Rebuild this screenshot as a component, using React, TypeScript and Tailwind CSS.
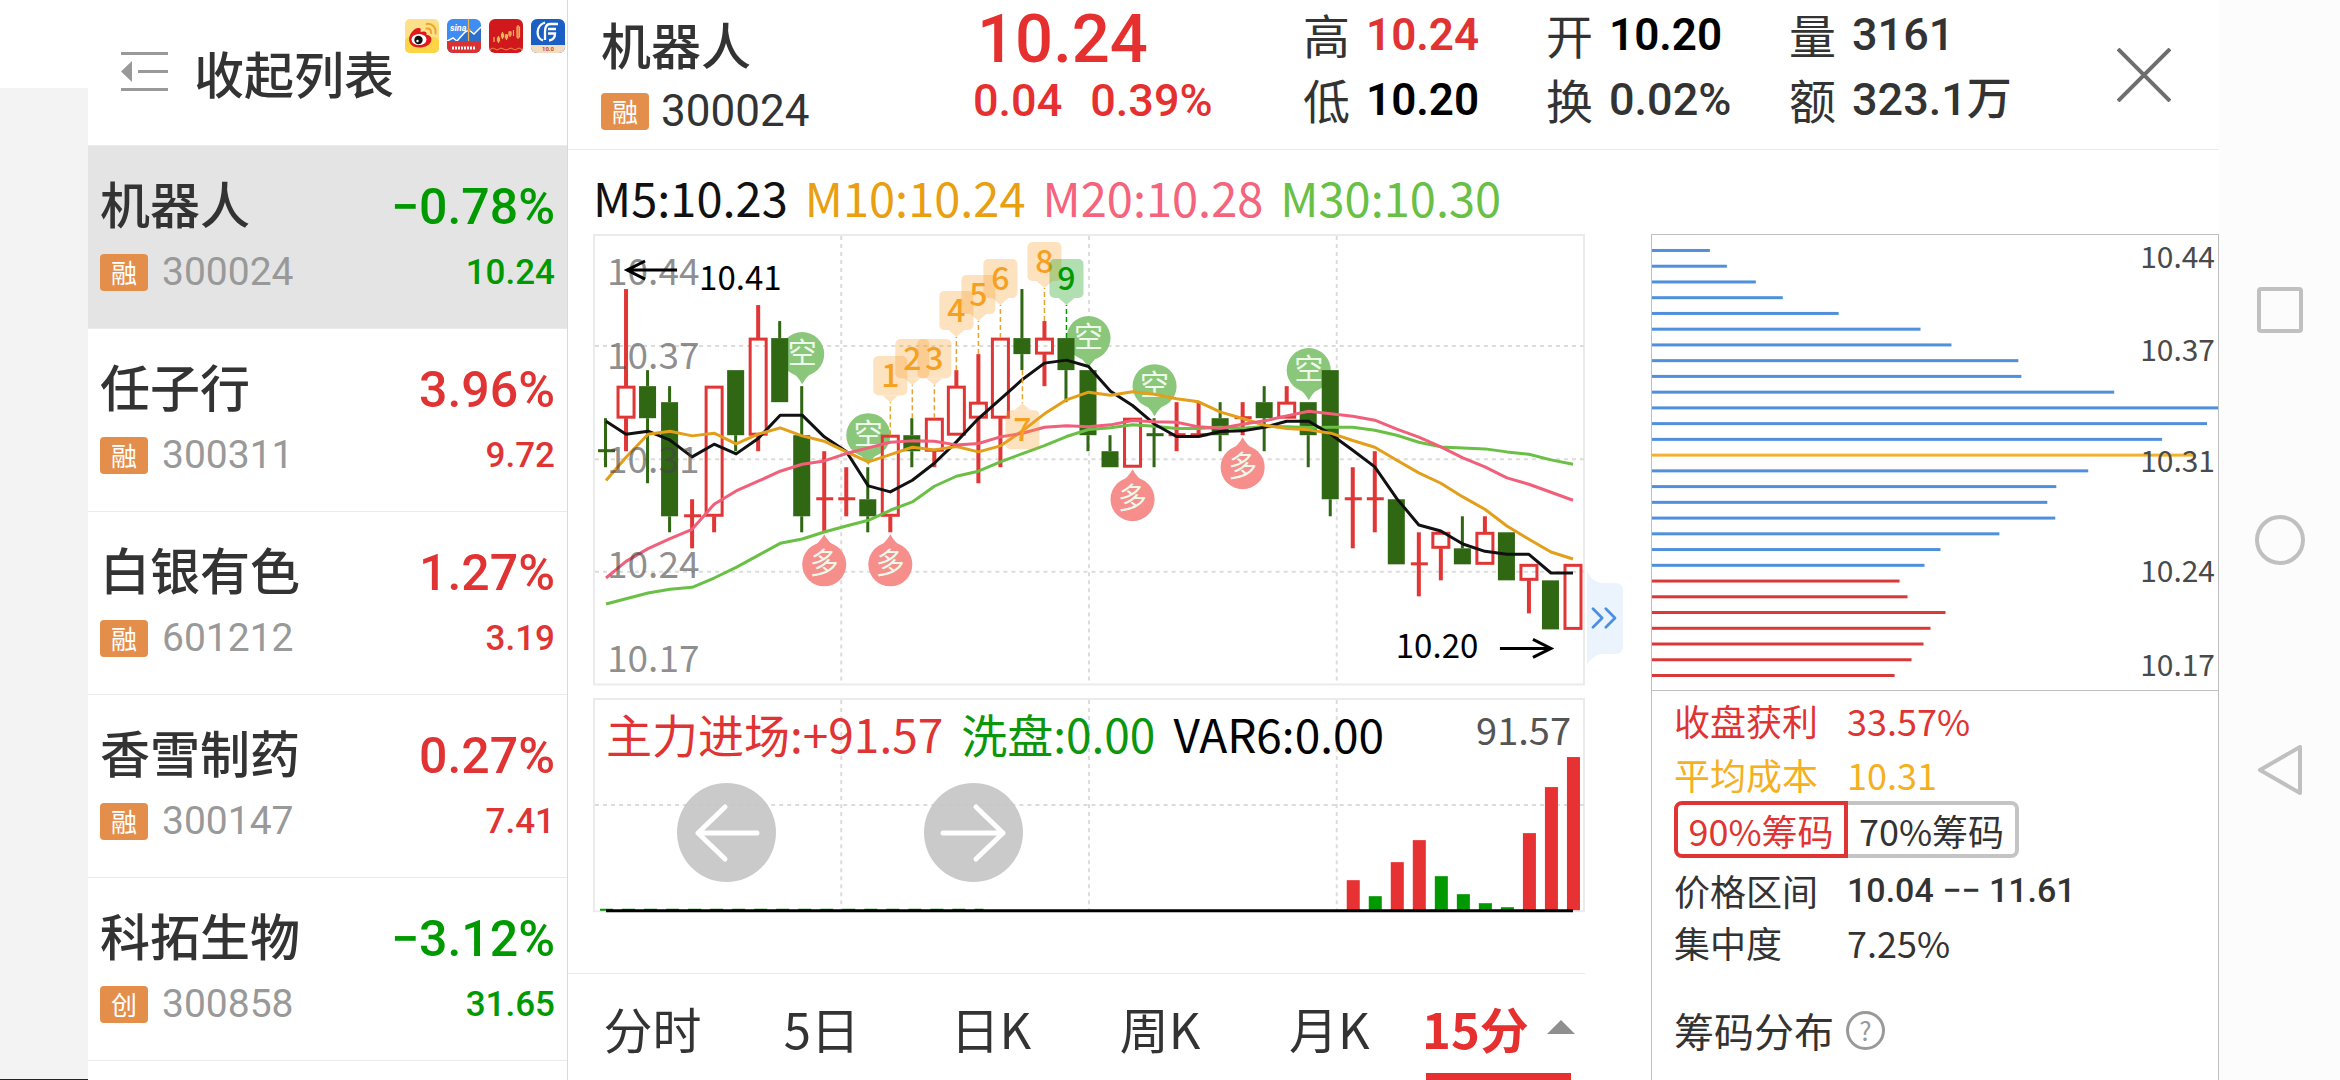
import { ChevronsRight } from "lucide-react";
import clsx from "clsx";

const CJK = "font-['Noto_Sans_CJK_SC',sans-serif]";
const DIN = "font-['Roboto','Noto_Sans_CJK_SC',sans-serif]";

type Stock = {
  name: string;
  tag: string;
  code: string;
  pct: string;
  price: string;
};

const stocks: Stock[] = [
  { name: "机器人", tag: "融", code: "300024", pct: "−0.78%", price: "10.24" },
  { name: "任子行", tag: "融", code: "300311", pct: "3.96%", price: "9.72" },
  { name: "白银有色", tag: "融", code: "601212", pct: "1.27%", price: "3.19" },
  { name: "香雪制药", tag: "融", code: "300147", pct: "0.27%", price: "7.41" },
  { name: "科拓生物", tag: "创", code: "300858", pct: "−3.12%", price: "31.65" },
];

const stats = [
  { label: "高", value: "10.24", cls: "text-[44px] font-semibold text-[#e03434]" },
  { label: "开", value: "10.20", cls: "text-[44px] font-semibold text-black" },
  { label: "量", value: "3161", cls: "text-[45px] font-medium text-[#333]" },
  { label: "低", value: "10.20", cls: "text-[44px] font-semibold text-black" },
  { label: "换", value: "0.02%", cls: "text-[45px] font-medium text-[#333]" },
  { label: "额", value: "323.1万", cls: "text-[45px] font-medium text-[#333]" },
];

const averages = [
  { text: "M5:10.23", cls: "text-[#111]" },
  { text: "M10:10.24", cls: "text-[#e89f12]" },
  { text: "M20:10.28", cls: "text-[#f4647c]" },
  { text: "M30:10.30", cls: "text-[#6abf45]" },
];

const tabs = ["分时", "5日", "日K", "周K", "月K", "15分"];

// high, body top, body bottom, low: in ticks of 0.01 below 10.41
type Candle = [number, number, number, number, "r" | "g"];

const candles: Candle[] = [
  [8, 10, 10, 11, "g"],
  [0, 6, 8, 10, "r"],
  [5, 6, 8, 12, "g"],
  [6, 7, 14, 15, "g"],
  [13, 14, 14, 16, "r"],
  [6, 6, 14, 15, "r"],
  [5, 5, 9, 10, "g"],
  [1, 3, 9, 10, "r"],
  [2, 3, 7, 7, "g"],
  [6, 9, 14, 15, "g"],
  [10, 13, 13, 15, "r"],
  [11, 13, 13, 14, "r"],
  [11, 13, 14, 15, "g"],
  [9, 9, 14, 15, "r"],
  [8, 9, 10, 11, "g"],
  [8, 8, 10, 11, "r"],
  [5, 6, 9, 9, "r"],
  [4, 7, 8, 12, "r"],
  [3, 3, 8, 11, "r"],
  [0, 3, 4, 5, "g"],
  [2, 3, 4, 6, "r"],
  [3, 3, 5, 7, "g"],
  [5, 5, 9, 10, "g"],
  [9, 10, 11, 11, "g"],
  [8, 8, 11, 11, "r"],
  [8, 9, 9, 11, "g"],
  [7, 9, 9, 10, "r"],
  [7, 9, 9, 9, "r"],
  [7, 8, 9, 10, "g"],
  [7, 8, 8, 9, "r"],
  [6, 7, 8, 10, "g"],
  [6, 7, 8, 8, "r"],
  [7, 7, 9, 11, "g"],
  [5, 5, 13, 14, "g"],
  [11, 13, 13, 16, "r"],
  [10, 13, 13, 15, "r"],
  [13, 13, 17, 17, "g"],
  [15, 17, 17, 19, "r"],
  [15, 15, 16, 18, "r"],
  [14, 16, 17, 17, "g"],
  [14, 15, 17, 17, "r"],
  [15, 15, 18, 18, "g"],
  [17, 17, 18, 20, "r"],
  [18, 18, 21, 21, "g"],
  [17, 17, 21, 21, "r"],
];

// average lines, in thirds of a chart unit
const lines = [
  {
    color: "#6abf45",
    values: [1136, 1120, 1103, 1092, 1086, 1058, 1026, 990, 954, 941, 920, 902, 885, 855, 830, 783, 753, 738, 710, 685, 661, 634, 613, 608, 599, 603, 610, 610, 606, 609, 604, 605, 607, 606, 606, 615, 630, 651, 665, 668, 671, 680, 687, 704, 717],
  },
  {
    color: "#111",
    values: [588, 627, 618, 645, 695, 657, 686, 640, 570, 570, 635, 679, 782, 800, 765, 714, 650, 580, 522, 463, 414, 405, 424, 498, 541, 597, 634, 634, 619, 617, 606, 588, 588, 627, 675, 725, 820, 899, 917, 956, 978, 987, 987, 1043, 1043],
  },
  {
    color: "#e39f1a",
    values: [766, 696, 627, 618, 632, 624, 656, 627, 608, 632, 648, 680, 710, 688, 666, 674, 664, 680, 662, 617, 566, 524, 501, 510, 500, 507, 521, 530, 561, 580, 600, 610, 614, 624, 646, 666, 705, 743, 774, 815, 852, 902, 942, 980, 1001],
  },
  {
    color: "#f0607a",
    values: [1058, 1008, 970, 940, 912, 837, 797, 768, 738, 717, 707, 685, 668, 651, 647, 648, 659, 655, 635, 624, 606, 602, 605, 599, 586, 590, 591, 605, 609, 597, 587, 572, 558, 566, 573, 585, 612, 636, 665, 698, 725, 758, 777, 801, 825],
  },
];

const shortSignals = [9, 12, 22, 25, 32];
const longSignals = [10, 13, 24, 29];

const counts = [
  { n: 1, at: 13 },
  { n: 2, at: 14 },
  { n: 3, at: 15 },
  { n: 4, at: 16 },
  { n: 5, at: 17 },
  { n: 6, at: 18 },
  { n: 7, at: 19, below: true },
  { n: 8, at: 20 },
  { n: 9, at: 21, done: true },
];

const flows: [number, "r" | "g"][] = [
  [30, "r"],
  [14, "g"],
  [48, "r"],
  [70, "r"],
  [34, "g"],
  [16, "g"],
  [7, "g"],
  [3, "g"],
  [77, "r"],
  [123, "r"],
  [153, "r"],
];

const chips = [58, 75, 104, 131, 187, 269, 300, 367, 370, 463, 567, 556, 511, 542, 437, 405, 396, 404, 348, 289, 273, 248, 256, 294, 279, 272, 260, 243];

const cx = (i: number) => (i === 0 ? 13 : 11 + i * 22);
const cy = (tick: number) => Math.round(55 + tick * 16.18);

function Badge({ text }: { text: string }) {
  return (
    <span className={`${CJK} grid h-[37px] w-12 shrink-0 place-items-center rounded bg-[#e38e4b] text-[26px] leading-none text-white`}>
      {text}
    </span>
  );
}

function AppIcons() {
  return (
    <div className="absolute left-[317px] top-[19px] flex gap-2" aria-hidden>
      <svg width="34" height="34" viewBox="0 0 34 34">
        <rect width="34" height="34" rx="5" fill="#fce08a" />
        <rect y="18" width="34" height="16" rx="5" fill="#fdd446" />
        <path d="M4 20c0-5 6-12 10-11 2 0 2 2 1.500 4 3-1 7-1 6 3 3 0 5 2 5 4.500C26 26 20 28.500 14.500 28.500 8 28.500 4 25 4 20z" fill="#e2191c" />
        <ellipse cx="14" cy="20.500" rx="7.500" ry="5.500" fill="#fff" />
        <circle cx="13.500" cy="21" r="4.200" fill="#111" />
        <circle cx="12.500" cy="22" r="1.200" fill="#fff" />
        <path d="M21.500 9.500c3-.500 5 1.500 4.500 4.500M21.500 5c5.500-1 10 3.500 9 9.500" fill="none" stroke="#f5a02b" strokeWidth="2" strokeLinecap="round" />
      </svg>
      <svg width="34" height="34" viewBox="0 0 34 34">
        <rect width="34" height="34" rx="6" fill="#3f8df2" />
        <path d="M0 22l6-4 5 3 8-8 4-3 4 4 7-6v14H0z" fill="#2f6fc9" />
        <path d="M0 22l6-3 4 3 8-9 4-2 5 4 7-7" fill="none" stroke="#fff" strokeWidth="1.500" />
        <path d="M21.500 0v22" stroke="#f2b54a" strokeWidth="1.200" />
        <circle cx="22" cy="11" r="1.700" fill="#f29b27" />
        <path d="M0 22h34v6a6 6 0 0 1-6 6H6a6 6 0 0 1-6-6z" fill="#dc3131" />
        <text x="3" y="12" fontSize="9" fontStyle="italic" fontWeight="700" fill="#fff" className="font-['Roboto',sans-serif]">sina</text>
        <path d="M5 29h24" stroke="#fff" strokeWidth="3" strokeDasharray="2 1" />
      </svg>
      <svg width="34" height="34" viewBox="0 0 34 34">
        <rect width="34" height="34" rx="6" fill="#d0181d" />
        <g fill="none" stroke="#f3b45c" strokeWidth="1.200">
          <path d="M5 18v5M9.500 17v7M13.500 13v7M17.500 15v6M21 12v6M24.500 11v6M29 6v14" />
          <path d="M8.500 19h2v3h-2zM12.500 15h2v3h-2zM16.500 16h2v3h-2zM20 13h2v3h-2zM28 8h2.500v10H28z" />
          <path d="M0 31l4-2 4 2 4-2 5 2 5-2 4 2 4-2 4 2" stroke="#e88a4a" strokeWidth="1" />
        </g>
      </svg>
      <svg width="34" height="34" viewBox="0 0 34 34">
        <rect width="34" height="34" rx="6" fill="#1c5fc4" />
        <path d="M0 26h34v2a6 6 0 0 1-6 6H6a6 6 0 0 1-6-6z" fill="#f3dcc0" />
        <g fill="none" stroke="#fff" strokeWidth="2.300">
          <path d="M14 3.500C4 7 5 19 12 21.500" />
          <path d="M27 5h-8c-4 0-5 3-5 8v8M25 10h-8M17 14.500h7c0 4-2 6.500-6 7" />
        </g>
        <text x="17" y="32" fontSize="6" fontWeight="700" textAnchor="middle" fill="#c44a3a" className="font-['Roboto',sans-serif]">10.0</text>
      </svg>
    </div>
  );
}

function StockList() {
  return (
    <aside className="relative flex w-[480px] shrink-0 flex-col border-r border-[#d9d9d9]">
      <button type="button" className="flex h-[146px] shrink-0 items-center gap-[26px] border-b border-[#ebebeb] pb-[2px] pl-[33px] text-left">
        <svg width="47" height="40" viewBox="0 0 47 40" fill="#999" aria-hidden>
          <path d="M0 0h47v3H0zM17 18h30v3H17zM0 36h47v3H0zM0 19.500L11 9v21z" />
        </svg>
        <span className={`${CJK} text-[50px] font-medium leading-none text-[#333]`}>收起列表</span>
      </button>
      <AppIcons />
      <ul>
        {stocks.map((s, i) => (
          <li key={s.code} className={clsx("border-b border-[#ebebeb]", i === 0 && "bg-[#e4e4e4]")}>
            <button
              type="button"
              className="grid h-[182px] w-full grid-cols-[auto_1fr] grid-rows-[64px_76px] items-center pl-3 pr-3 pt-6 text-left"
            >
              <span className={`${CJK} text-[50px] font-medium leading-[64px] text-[#333]`}>{s.name}</span>
              <span
                className={clsx(
                  DIN,
                  "pt-[10px] text-right text-[50px] font-medium leading-[64px]",
                  s.pct.startsWith("−") ? "text-[#009900]" : "text-[#e03434]"
                )}
              >
                {s.pct}
              </span>
              <span className="flex items-center gap-[14px]">
                <Badge text={s.tag} />
                <span className={`${DIN} text-[39px] leading-none text-[#999]`}>{s.code}</span>
              </span>
              <span
                className={clsx(
                  DIN,
                  "text-right text-[35px] font-medium leading-none",
                  s.pct.startsWith("−") ? "text-[#009900]" : "text-[#e03434]"
                )}
              >
                {s.price}
              </span>
            </button>
          </li>
        ))}
      </ul>
    </aside>
  );
}

function QuoteHeader() {
  return (
    <header className="flex h-[150px] shrink-0 border-b border-[#ebebeb] pl-[33px]">
      <div className="w-[372px] pt-2">
        <h1 className={`${CJK} text-[50px] font-medium leading-[70px] text-[#333]`}>机器人</h1>
        <div className="flex h-[66px] items-center gap-3">
          <Badge text="融" />
          <span className={`${DIN} text-[44px] leading-none text-[#333]`}>300024</span>
        </div>
      </div>
      <div className={`${DIN} w-[330px] font-medium text-[#e62f2f]`}>
        <p className="pl-1 text-[67px] leading-[79px]">10.24</p>
        <p className="flex gap-7 text-[45px] leading-[44px]">
          <span>0.04</span>
          <span>0.39%</span>
        </p>
      </div>
      <dl className="grid grid-cols-[243px_243px_auto] grid-rows-[65px_65px] pt-[2px]">
        {stats.map((s) => (
          <div key={s.label} className="flex items-start gap-4">
            <dt className={`${CJK} text-[47px] leading-[64px] text-[#333]`}>{s.label}</dt>
            <dd className={clsx(DIN, "whitespace-nowrap leading-[66px]", s.cls)}>{s.value}</dd>
          </div>
        ))}
      </dl>
      <button type="button" aria-label="关闭" className="my-auto ml-auto mr-12">
        <svg width="54" height="54" viewBox="0 0 54 54" fill="none" stroke="#6e6e6e" strokeWidth="4" aria-hidden>
          <path d="M1 1l52 52M53 1L1 53" />
        </svg>
      </button>
    </header>
  );
}

function Signal({ at, side }: { at: number; side: "short" | "long" }) {
  const short = side === "short";
  const x = cx(at);
  const y = short ? cy(candles[at][0]) - 32 : cy(candles[at][3]) + 32;
  const d = short ? 1 : -1;
  return (
    <g>
      <g fill={short ? "#8bc77b" : "#f68e8c"}>
        <circle cx={x} cy={y} r="22" />
        <path d={`M${x - 14} ${y + 15 * d}Q${x - 4} ${y + 22 * d} ${x} ${y + 30 * d}Q${x + 4} ${y + 22 * d} ${x + 14} ${y + 15 * d}z`} />
      </g>
      <text x={x} y={y + 10} textAnchor="middle" fontSize="29" fill="#eef9ea" className={CJK}>
        {short ? "空" : "多"}
      </text>
    </g>
  );
}

function CountTag({ n, at, below, done }: { n: number; at: number; below?: boolean; done?: boolean }) {
  const x = cx(at);
  const edge = below ? cy(candles[at][3]) : cy(candles[at][0]);
  const tip = below ? edge + 33 : edge - 33;
  const top = below ? tip + 7 : tip - 46;
  const color = done ? "#009900" : "#f5a11f";
  const d = below ? -1 : 1;
  return (
    <g>
      <path d={`M${x} ${edge}V${tip}`} stroke={done ? "#009900" : "#e5a52e"} strokeWidth="1.500" strokeDasharray="5 3" />
      <g fill={done ? "#009900" : "#fba030"} opacity="0.3">
        <rect x={x - 17} y={top} width="34" height="39" rx="5" />
        <path d={`M${x - 8} ${tip - 7 * d}L${x} ${tip}L${x + 8} ${tip - 7 * d}z`} />
      </g>
      <text x={x} y={top + 31} textAnchor="middle" fontSize="32" fontWeight="500" fill={color} className={CJK}>
        {n}
      </text>
    </g>
  );
}

function CandleChart() {
  return (
    <svg viewBox="0 0 991 452" className="block w-full" role="img" aria-label="15分K线">
      <rect x="1" y="1" width="989" height="449" fill="none" stroke="#ebebeb" strokeWidth="2" />
      <path
        d="M248 2V450M495.500 2V450M743 2V450M2 112H990M2 225H990M2 337.500H990"
        fill="none"
        stroke="#dcdcdc"
        strokeWidth="2"
        strokeDasharray="4 4"
      />
      {shortSignals.map((at) => (
        <Signal key={at} at={at} side="short" />
      ))}
      {longSignals.map((at) => (
        <Signal key={at} at={at} side="long" />
      ))}
      {candles.map(([h, t, b, l, c], i) => {
        const x = cx(i);
        const color = c === "r" ? "#e03636" : "#2f6713";
        return (
          <g key={i} fill={color}>
            {t === b ? (
              <>
                <rect x={x - 2} y={cy(h)} width={c === "r" ? 4 : 3} height={cy(l) - cy(h)} />
                <rect x={x - 8} y={cy(t) - 2} width="17" height="3" />
              </>
            ) : (
              <>
                <rect x={x - 2} y={cy(h)} width={c === "r" ? 4 : 3} height={cy(t) - cy(h)} />
                <rect x={x - 2} y={cy(b)} width={c === "r" ? 4 : 3} height={cy(l) - cy(b)} />
                {c === "r" ? (
                  <rect x={x - 8} y={cy(t) + 1} width="16" height={cy(b) - cy(t) - 2} fill="none" stroke={color} strokeWidth="3" />
                ) : (
                  <rect x={x - 9} y={cy(t)} width="17" height={cy(b) - cy(t)} />
                )}
              </>
            )}
          </g>
        );
      })}
      {lines.map((line) => (
        <polyline
          key={line.color}
          points={line.values.map((v, i) => `${cx(i)},${v / 3 - 9}`).join(" ")}
          fill="none"
          stroke={line.color}
          strokeWidth="3"
          strokeLinejoin="round"
        />
      ))}
      <g fontSize="37" fill="#444" fillOpacity="0.6" className={CJK}>
        <text x="14" y="51">10.44</text>
        <text x="14" y="135">10.37</text>
        <text x="14" y="239">10.31</text>
        <text x="14" y="344">10.24</text>
        <text x="14" y="438">10.17</text>
      </g>
      {counts.map((c) => (
        <CountTag key={c.n} {...c} />
      ))}
      <g fontSize="33" className={CJK}>
        <text x="106" y="56">10.41</text>
        <text x="802" y="424">10.20</text>
      </g>
      <path d="M84 36H34M52 27L34 36L52 45M906 414H957M939 405L957 414L939 423" fill="none" stroke="#000" strokeWidth="3" />
    </svg>
  );
}

function FlowChart() {
  return (
    <div className="relative">
      <svg viewBox="0 0 991 215" className="block w-full" role="img" aria-label="主力进场">
        <rect x="1" y="1" width="989" height="212" fill="none" stroke="#ebebeb" strokeWidth="2" />
        <path
          d="M248 2V212M495.500 2V212M743 2V212M2 107H990"
          fill="none"
          stroke="#dcdcdc"
          strokeWidth="2"
          strokeDasharray="4 4"
        />
        {flows.map(([h, c], i) => (
          <rect key={i} x={cx(34 + i) - 6} y={212 - h} width="13" height={h} fill={c === "r" ? "#e63232" : "#009900"} />
        ))}
        <path d="M7 211.500H390" stroke="#009900" strokeWidth="2" strokeDasharray="13 9" />
        <path d="M13 212.500H979" stroke="#000" strokeWidth="3" />
      </svg>
      <div className={`${CJK} absolute inset-x-0 top-2 flex gap-[18px] whitespace-nowrap pl-[13px] pr-[14px] text-[46px] leading-[54px]`}>
        <span className="text-[#e03434]">主力进场:+91.57</span>
        <span className="text-[#0b960b]">洗盘:0.00</span>
        <span className="text-black">VAR6:0.00</span>
        <span className="ml-auto text-[38px] leading-[46px] text-[#555]">91.57</span>
      </div>
      <div className="absolute left-[84px] top-[85px] flex gap-[148px]">
        <button type="button" aria-label="向左" className="rounded-full bg-[#c4c4c4]/90">
          <svg width="99" height="99" viewBox="0 0 99 99" fill="none" stroke="#fff" strokeWidth="5" strokeLinecap="round" strokeLinejoin="round" aria-hidden>
            <path d="M80 50H21M48 24L21 50L48 76" />
          </svg>
        </button>
        <button type="button" aria-label="向右" className="rounded-full bg-[#c4c4c4]/90">
          <svg width="99" height="99" viewBox="0 0 99 99" fill="none" stroke="#fff" strokeWidth="5" strokeLinecap="round" strokeLinejoin="round" aria-hidden>
            <path d="M19 50H79M52 24L79 50L52 76" />
          </svg>
        </button>
      </div>
    </div>
  );
}

function PeriodTabs() {
  return (
    <div role="tablist" className="mt-auto grid h-[107px] grid-cols-6 border-t border-[#ebebeb] pr-[2px]">
      {tabs.map((t) => {
        const on = t === "15分";
        return (
          <button
            key={t}
            type="button"
            role="tab"
            aria-selected={on}
            className={clsx(
              CJK,
              "mx-3 flex items-center justify-center whitespace-nowrap text-[49px] leading-none",
              on ? "gap-[18px] border-b-[7px] border-[#e63030] pt-[7px] font-bold text-[#e63030]" : "text-[#333]"
            )}
          >
            {t}
            {on && (
              <svg width="28" height="14" viewBox="0 0 28 14" fill="#8f8f8f" className="shrink-0" aria-hidden>
                <path d="M14 0l14 14H0z" />
              </svg>
            )}
          </button>
        );
      })}
    </div>
  );
}

function ChipPanel() {
  return (
    <section className={`${CJK} mt-[84px] flex flex-1 flex-col border border-b-0 border-[#bfbfbf] text-[36px] leading-[54px] text-[#333]`}>
      <svg viewBox="0 0 567 456" className="block w-full shrink-0 overflow-visible" role="img" aria-label="筹码分布图">
        {chips.map((w, i) => (
          <rect
            key={i}
            y={14 + i * 15.77}
            width={w}
            height="3"
            fill={i === 13 ? "#f3b22e" : i > 20 ? "#d93838" : "#4f8fdc"}
          />
        ))}
        <g fontSize="30" textAnchor="end" fill="#4a4a4a">
          <text x="564" y="33">10.44</text>
          <text x="564" y="126">10.37</text>
          <text x="564" y="237">10.31</text>
          <text x="564" y="348">10.24</text>
          <text x="564" y="442">10.17</text>
        </g>
      </svg>
      <div className="border-t border-[#bfbfbf] pl-[22px] pt-[2px]">
        <p className="flex text-[#e03434]">
          <span className="w-[173px]">收盘获利</span>
          <span>33.57%</span>
        </p>
        <p className="flex text-[#f5b01f]">
          <span className="w-[173px]">平均成本</span>
          <span>10.31</span>
        </p>
        <div className="flex">
          <button type="button" aria-pressed="true" className="h-[57px] w-[174px] rounded-l-lg border-4 border-[#e03434] leading-none text-[#e03434]">
            90%筹码
          </button>
          <button type="button" aria-pressed="false" className="h-[57px] w-[171px] rounded-r-lg border-4 border-l-0 border-[#c4c4c4] leading-none">
            70%筹码
          </button>
        </div>
        <p className="mt-[6px] flex leading-[52px]">
          <span className="w-[173px]">价格区间</span>
          <span className={`${DIN} text-[34px] font-medium`}>10.04 −− 11.61</span>
        </p>
        <p className="flex leading-[52px]">
          <span className="w-[173px]">集中度</span>
          <span>7.25%</span>
        </p>
        <div className="mt-8 flex items-center gap-3 text-[40px] leading-[60px]">
          筹码分布
          <button type="button" aria-label="说明" className="grid h-[39px] w-[39px] place-items-center rounded-full border-[3px] border-[#999] text-[26px] leading-none text-[#999]">
            ?
          </button>
        </div>
      </div>
    </section>
  );
}

function SystemNav() {
  return (
    <nav className="flex w-[121px] shrink-0 flex-col items-center justify-center gap-[180px] bg-[#fcfcfc]">
      <button type="button" aria-label="最近任务">
        <svg width="50" height="50" viewBox="0 0 50 50" fill="none" stroke="#c0c0c0" strokeWidth="4" aria-hidden>
          <rect x="4" y="4" width="42" height="42" rx="2" />
        </svg>
      </button>
      <button type="button" aria-label="主屏幕">
        <svg width="50" height="50" viewBox="0 0 50 50" fill="none" stroke="#c0c0c0" strokeWidth="4" aria-hidden>
          <circle cx="25" cy="25" r="23" />
        </svg>
      </button>
      <button type="button" aria-label="返回">
        <svg width="50" height="50" viewBox="0 0 50 50" fill="none" stroke="#c0c0c0" strokeWidth="4" strokeLinejoin="round" aria-hidden>
          <path d="M45 2v46L5 25z" />
        </svg>
      </button>
    </nav>
  );
}

export default function App() {
  return (
    <div className="flex h-screen overflow-hidden bg-white">
      <div className="w-[88px] shrink-0 pt-[88px]">
        <div className="h-full border-b border-[#222] bg-[#f3f3f3]" />
      </div>
      <StockList />
      <div className="flex min-w-0 flex-1 flex-col">
        <QuoteHeader />
        <div className="flex flex-1">
          <main className="flex min-w-0 flex-1 flex-col">
            <div className="pl-[25px]">
              <div className={`${CJK} flex h-[84px] gap-[17px] whitespace-nowrap pt-[10px] text-[47px] leading-[74px]`}>
                {averages.map((a) => (
                  <span key={a.text} className={a.cls}>
                    {a.text}
                  </span>
                ))}
              </div>
              <div className="flex flex-col gap-3">
                <CandleChart />
                <FlowChart />
              </div>
            </div>
            <PeriodTabs />
          </main>
          <button type="button" aria-label="收起筹码" className="ml-[2px] mr-7 mt-[421px] h-[94px] w-9 shrink-0 self-start">
            <svg width="36" height="94" viewBox="0 0 36 94" aria-hidden>
              <path d="M0 0C4 8 9 12 16 12H28Q36 12 36 20V74Q36 83 28 83H16C9 83 4 87 0 94z" fill="#ebf3fd" />
              <ChevronsRight x="-5" y="25" width="44" height="44" color="#4a90e2" strokeWidth="1.500" />
            </svg>
          </button>
          <div className="flex w-[568px] shrink-0 flex-col">
            <ChipPanel />
          </div>
        </div>
      </div>
      <SystemNav />
    </div>
  );
}
